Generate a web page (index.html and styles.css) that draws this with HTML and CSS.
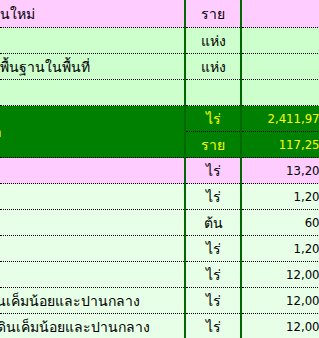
FILE: index.html
```html
<!DOCTYPE html>
<html lang="th">
<head>
<meta charset="utf-8">
<link rel="stylesheet" href="styles.css">
</head>
<body>
<div class="sheet">
  <div class="row pink first">
    <div class="cell name">นใหม่</div>
    <div class="cell unit">ราย</div>
    <div class="cell val"></div>
  </div>
  <div class="row mint">
    <div class="cell name"></div>
    <div class="cell unit">แห่ง</div>
    <div class="cell val"></div>
  </div>
  <div class="row mint">
    <div class="cell name">พื้นฐานในพื้นที่</div>
    <div class="cell unit">แห่ง</div>
    <div class="cell val"></div>
  </div>
  <div class="row mint">
    <div class="cell name"></div>
    <div class="cell unit"></div>
    <div class="cell val"></div>
  </div>
  <div class="row total">
    <div class="cell name merged"><span class="cut-total">ก</span></div>
    <div class="cell unit">ไร่</div>
    <div class="cell val">2,411,977</div>
    <div class="cell unit">ราย</div>
    <div class="cell val">117,258</div>
  </div>
  <div class="row pink">
    <div class="cell name"></div>
    <div class="cell unit">ไร่</div>
    <div class="cell val">13,200</div>
  </div>
  <div class="row pale">
    <div class="cell name"></div>
    <div class="cell unit">ไร่</div>
    <div class="cell val">1,200</div>
  </div>
  <div class="row pale">
    <div class="cell name"></div>
    <div class="cell unit">ต้น</div>
    <div class="cell val">600</div>
  </div>
  <div class="row pale">
    <div class="cell name"></div>
    <div class="cell unit">ไร่</div>
    <div class="cell val">1,200</div>
  </div>
  <div class="row pale">
    <div class="cell name"></div>
    <div class="cell unit">ไร่</div>
    <div class="cell val">12,000</div>
  </div>
  <div class="row pale">
    <div class="cell name"><span class="cut-a">นเค็มน้อยและปานกลาง</span></div>
    <div class="cell unit">ไร่</div>
    <div class="cell val">12,000</div>
  </div>
  <div class="row pale">
    <div class="cell name"><span class="cut-b">ดินเค็มน้อยและปานกลาง</span></div>
    <div class="cell unit">ไร่</div>
    <div class="cell val">12,000</div>
  </div>
</div>
</body>
</html>
```
FILE: styles.css
```css
html, body {
  margin: 0;
  padding: 0;
  background: #ffffff;
}
.sheet {
  width: 319px;
  height: 338px;
  overflow: hidden;
  font-family: Tahoma, "DejaVu Sans", sans-serif;
  font-size: 14px;
  color: #000000;
}
.row {
  display: grid;
  grid-template-columns: 184px 54px 86px;
  grid-auto-rows: 26px;
  column-gap: 2px;
  width: 328px;
  background: #006800;
}
.row.first {
  grid-auto-rows: 28px;
}
.cell {
  box-sizing: border-box;
  border-bottom: 1px dotted #000000;
  display: flex;
  align-items: center;
  white-space: nowrap;
  overflow: hidden;
  line-height: 1;
}
.pink .cell { background: #ffccff; }
.mint .cell { background: #ccffcc; }
.pale .cell { background: #e6ffe6; }
.total .cell { background: #008000; color: #ffff00; }
.total .merged {
  grid-row: span 2;
}
.name {
  justify-content: flex-start;
}
.unit {
  justify-content: center;
}
.val {
  justify-content: flex-end;
  padding-right: 1px;
  font-family: "DejaVu Sans Condensed", "DejaVu Sans", sans-serif;
  font-stretch: condensed;
  font-size: 13px;
}
.cut-a { margin-left: -4px; }
.cut-b { margin-left: -3px; }
.cut-total { margin-left: -7px; }
```
